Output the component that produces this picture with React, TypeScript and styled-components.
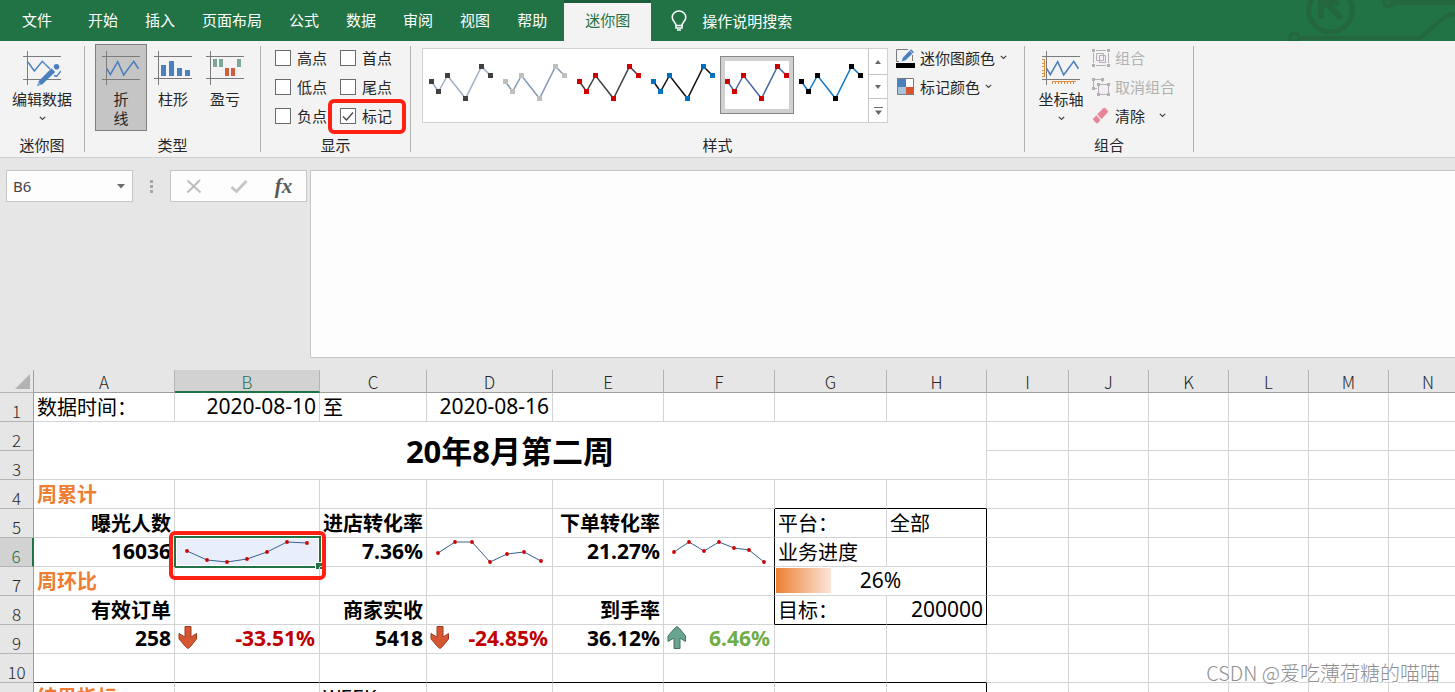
import React from 'react';
import styled, { createGlobalStyle, css } from 'styled-components';

const GREEN = '#217346';
const LINE = '#d4d4d4';
const BLUE = '#4a81bd';
const ORANGE = '#ed7d31';
const MARK = '#ff2214';

const GlobalStyle = createGlobalStyle`
  * { box-sizing: border-box; }
  body {
    margin: 0;
    background: #e6e6e6;
    color: #262626;
    font: 15px/18px "Noto Sans CJK SC", "Noto Sans", sans-serif;
  }
  button, input, textarea { font: inherit; color: inherit; }
  button { background: none; border: 0; padding: 0; white-space: nowrap; }
  svg { display: block; flex: none; }
`;

const Page = styled.div`
  position: relative;
  height: 100vh;
  display: flex;
  flex-direction: column;
  overflow: hidden;
`;

/* ---------- tab strip ---------- */

const TabStrip = styled.header`
  position: relative;
  flex: none;
  height: 41px;
  padding-left: 9px;
  display: flex;
  align-items: stretch;
  background: ${GREEN};
  color: #fff;
`;

const Tabs = styled.nav`
  display: flex;
  gap: 1px;
`;

const Tab = styled.button<{ $file?: boolean; $active?: boolean }>`
  padding: 0 13px 2px;
  ${(p) => p.$file && css`margin-right: 9px;`}
  ${(p) =>
    p.$active &&
    css`
      margin-left: 3px;
      padding: 0 21px 5px;
      border-top: 3px solid #1b5e39;
      background: #f3f3f3;
      color: ${GREEN};
    `}
`;

const TellMe = styled.button`
  display: flex;
  align-items: center;
  gap: 15px;
  padding: 0 20px;
  z-index: 1;
`;

const Decoration = styled.svg`
  position: absolute;
  top: 0;
  right: 0;
`;

/* ---------- ribbon ---------- */

const RibbonBar = styled.div`
  flex: none;
  display: flex;
  height: 117px;
  background: #f3f3f3;
  border-bottom: 1px solid #d0d0d0;
`;

const Group = styled.section<{ $width: number; $left: number }>`
  flex: none;
  width: ${(p) => p.$width}px;
  display: grid;
  grid-template-rows: 1fr 24px;
  & > div {
    padding: 2px 0 0 ${(p) => p.$left}px;
  }
`;

const GroupBody = styled.div`
  display: flex;
  align-items: flex-start;
`;

const GroupName = styled.span`
  text-align: center;
  line-height: 24px;
`;

const Separator = styled.i`
  flex: none;
  width: 1px;
  margin: 5px 0;
  background: #b1b1b1;
`;

const BigButton = styled.button<{ $pressed?: boolean; $wide?: boolean }>`
  width: ${(p) => (p.$wide ? 64 : 52)}px;
  height: 87px;
  margin-top: 1px;
  padding-top: 5px;
  border: 1px solid ${(p) => (p.$pressed ? '#7f7f7f' : 'transparent')};
  background: ${(p) => (p.$pressed ? '#c5c5c5' : 'transparent')};
  display: flex;
  flex-direction: column;
  align-items: center;
  line-height: 19px;
`;

const BigCaption = styled.span<{ $stacked?: boolean }>`
  margin: 2px 0 8px;
  ${(p) => p.$stacked && css`width: 16px; white-space: normal;`}
`;

const CheckGrid = styled.div`
  display: grid;
  grid-template-columns: 65px 65px;
  grid-auto-rows: 29px;
`;

const CheckLabel = styled.label<{ $marked?: boolean }>`
  position: relative;
  display: flex;
  align-items: center;
  gap: 6px;
  width: 52px;
  white-space: nowrap;
  ${(p) =>
    p.$marked &&
    css`
      &::after {
        content: '';
        position: absolute;
        inset: -2px -14px -4px -12px;
        border: 4px solid ${MARK};
        border-radius: 6px;
      }
    `}
`;

const Check = styled.input`
  appearance: none;
  flex: none;
  width: 16px;
  height: 16px;
  margin: 0;
  border: 1px solid #6a6a6a;
  background: #fff;
  &:checked {
    background: #fff
      url("data:image/svg+xml,%3Csvg xmlns='http://www.w3.org/2000/svg' width='14' height='14'%3E%3Cpath d='M2 7.5 5.5 11 12 3.5' fill='none' stroke='%23444' stroke-width='1.3'/%3E%3C/svg%3E")
      center no-repeat;
  }
`;

const Gallery = styled.div`
  display: flex;
  height: 75px;
  margin-top: 5px;
  border: 1px solid #d0d0d0;
  background: #fff;
`;

const GalleryItems = styled.div`
  display: flex;
  align-items: flex-start;
  padding: 7px 0 0 1px;
`;

const StyleItem = styled.button<{ $selected?: boolean }>`
  width: 74px;
  height: 58px;
  ${(p) =>
    p.$selected &&
    css`
      box-shadow: inset 0 0 0 1px #868686, inset 0 0 0 5px #d0d0d0;
    `}
`;

const GalleryScroll = styled.div`
  display: grid;
  grid-template-rows: 25px 24px 24px;
  width: 19px;
  border-left: 1px solid #c6c6c6;
`;

const ScrollButton = styled.button`
  display: grid;
  place-items: center;
  & + & {
    border-top: 1px solid #c6c6c6;
  }
`;

const Commands = styled.div<{ $gap: number }>`
  display: flex;
  flex-direction: column;
  align-items: flex-start;
  margin-left: ${(p) => p.$gap}px;
`;

const Command = styled.button`
  display: flex;
  align-items: center;
  gap: 5px;
  height: 29px;
  &:disabled {
    color: #b1b1b1;
  }
`;

const Spacer = styled.span`
  width: 4px;
`;

/* ---------- formula bar ---------- */

const FormulaRow = styled.div`
  flex: none;
  display: flex;
  align-items: flex-start;
  padding: 12px 0 12px 6px;
`;

const NameBox = styled.div`
  display: flex;
  align-items: center;
  width: 127px;
  height: 32px;
  border: 1px solid #c6c6c6;
  background: #fdfdfd;
`;

const NameInput = styled.input`
  flex: 1;
  min-width: 0;
  padding: 0 6px;
  border: 0;
  background: none;
  color: #444;
  font-family: "Noto Sans", sans-serif;
`;

const NameDrop = styled.button`
  width: 22px;
  height: 30px;
  display: grid;
  place-items: center;
`;

const Grip = styled.div`
  width: 37px;
  height: 32px;
  display: grid;
  place-items: center;
`;

const EntryButtons = styled.div`
  display: grid;
  grid-template-columns: repeat(3, 45px);
  width: 137px;
  height: 32px;
  margin-right: 3px;
  border: 1px solid #c6c6c6;
  background: #fdfdfd;
`;

const EntryButton = styled.button`
  display: grid;
  place-items: center;
  color: #595959;
  font: italic bold 21px/30px "Liberation Serif", serif;
`;

const FormulaInput = styled.textarea`
  flex: 1;
  height: 188px;
  padding: 6px;
  resize: none;
  border: 1px solid #c6c6c6;
  border-right: 0;
  background: #fdfdfd;
`;

/* ---------- sheet ---------- */

const SheetArea = styled.main`
  flex: 1;
  min-height: 0;
  overflow: hidden;
`;

const Sheet = styled.table`
  width: max(100%, 1468px);
  table-layout: fixed;
  border-collapse: separate;
  border-spacing: 0;
  background: #fff;
  color: #000;
  font-size: 20px;
  line-height: 28px;
`;

const ColHead = styled.th<{ $selected?: boolean }>`
  height: 23px;
  padding: ${(p) => (p.$selected ? '3px 0 0' : '2px 0 1px')};
  background: ${(p) => (p.$selected ? '#d2d2d2' : '#e6e6e6')};
  color: ${(p) => (p.$selected ? GREEN : '#262626')};
  border-right: 1px solid #b4b4b4;
  border-bottom: ${(p) => (p.$selected ? `2px solid ${GREEN}` : '1px solid #9f9f9f')};
  font-size: 17px;
  font-weight: 300;
  line-height: ${(p) => (p.$selected ? 18 : 19)}px;
  text-align: center;
`;

const Corner = styled.th`
  height: 23px;
  padding: 0 3px 0 15px;
  background: #e6e6e6;
  border-right: 1px solid #9f9f9f;
  border-bottom: 1px solid #b4b4b4;
`;

const RowHead = styled.th<{ $selected?: boolean }>`
  height: 29px;
  padding: 8px 0 0;
  background: ${(p) => (p.$selected ? '#d2d2d2' : '#e6e6e6')};
  color: ${(p) => (p.$selected ? GREEN : '#262626')};
  border-right: ${(p) => (p.$selected ? `2px solid ${GREEN}` : '1px solid #9f9f9f')};
  border-bottom: 1px solid #b4b4b4;
  font-size: 17px;
  font-weight: 300;
  line-height: 20px;
  text-align: center;
`;

type Tone = 'black' | 'section' | 'down' | 'up';
const TONES: Record<Tone, string> = {
  black: '#000',
  section: ORANGE,
  down: '#c00000',
  up: '#70ad47',
};

const Cell = styled.td<{
  $align?: 'right' | 'center';
  $bold?: boolean;
  $tone?: Tone;
  $number?: boolean;
  $frameRight?: boolean;
  $frameBottom?: boolean;
}>`
  position: relative;
  height: 29px;
  padding: 0 3px;
  white-space: nowrap;
  text-align: ${(p) => p.$align ?? 'left'};
  font-weight: ${(p) => (p.$bold ? 700 : 400)};
  color: ${(p) => TONES[p.$tone ?? 'black']};
  border-right: 1px solid ${(p) => (p.$frameRight ? '#000' : LINE)};
  border-bottom: 1px solid ${(p) => (p.$frameBottom ? '#000' : LINE)};
  ${(p) =>
    p.$number &&
    css`
      padding-bottom: 2px;
      font-family: "Noto Sans", sans-serif;
      font-size: 21px;
      line-height: 26px;
    `}
`;

const TitleCell = styled(Cell)`
  font-size: 31px;
  line-height: 56px;
  font-family: "Noto Sans", "Noto Sans CJK SC", sans-serif;
`;

const SparkCell = styled(Cell)`
  padding: 0;
`;

const Trend = styled.div`
  display: flex;
  align-items: center;
  justify-content: space-between;
  padding-right: 1px;
`;

const DataBar = styled.span`
  position: absolute;
  left: 1px;
  top: 1px;
  bottom: 2px;
  background: linear-gradient(90deg, #ee7f33, #fbe6da);
`;

const OverBar = styled.span`
  position: relative;
`;

const Selection = styled.div`
  position: absolute;
  inset: -2px -2px -2px -1px;
  border: 2px solid ${GREEN};
  background: #e9effa;
  box-shadow: inset 0 0 0 1px #fff;
  &::after {
    content: '';
    position: absolute;
    right: -3px;
    bottom: -3px;
    width: 6px;
    height: 6px;
    background: ${GREEN};
    border: solid #fff;
    border-width: 1px 0 0 1px;
  }
`;

const SparkLayer = styled.div`
  position: relative;
`;

const CellMark = styled.div`
  position: absolute;
  z-index: 1;
  inset: -7px -7px -14px -6px;
  border: 4px solid ${MARK};
  border-radius: 6px;
`;

const Watermark = styled.div`
  position: absolute;
  right: 15px;
  bottom: 5px;
  color: #8f8f8f;
  font-size: 20px;
  line-height: 28px;
  font-weight: 300;
  text-shadow: 1px 1px 0 #fff;
`;

/* ---------- drawings ---------- */

const Chevron = () => (
  <svg width="7" height="5" viewBox="0 0 7 5">
    <path d="M.8 .8 3.5 3.5 6.2 .8" fill="none" stroke="#444" strokeWidth="1.2" />
  </svg>
);

const Axes = ({ base = 29.5 }: { base?: number }) => (
  <path d={`M4.5 1V35M0 6.5H38M0 ${base}H38`} fill="none" stroke="#7b7b7b" />
);

const ZIGZAG = 'M4.7 18.3 8.3 24.7 15.7 11.7 21.7 25 31.7 11.3 36.5 18.8';

const Icon38 = ({ children }: { children: React.ReactNode }) => (
  <svg width="38" height="37" viewBox="0 0 38 37">{children}</svg>
);

const EditDataIcon = () => (
  <Icon38>
    <Axes />
    <path d="M5 12 11.3 21 19.3 11.3 27 19M31 25.5 33.5 26.5 38 21" fill="none" stroke={BLUE} strokeWidth="1.4" />
    <path d="M14 36 15.8 31 28.5 18.2 32.2 22 19.2 34.6Z" fill={BLUE} />
    <circle cx="33.500" cy="16.800" r="2.800" fill={BLUE} />
    <path d="m29.2 16.8 4.400 4.400" stroke="#f3f3f3" />
    <path d="m14.5 32.2 3.6 3.4" stroke="#f3f3f3" strokeWidth=".8" />
  </Icon38>
);

const LineIcon = () => (
  <Icon38>
    <Axes />
    <path d={ZIGZAG} fill="none" stroke={BLUE} strokeWidth="1.6" />
  </Icon38>
);

const ColumnIcon = () => (
  <Icon38>
    <Axes base={28.5} />
    <path d="M7 15h5v11H7zM15 11h5v15h-5zM23 18h5v8h-5zM31 20h5v6h-5z" fill={BLUE} />
  </Icon38>
);

const WinLossIcon = () => (
  <Icon38>
    <Axes base={28.5} />
    <path d="M7 9h4v8H7zM13 9h4v8h-4zM31 9h4v8h-4z" fill="#7aa796" />
    <path d="M19 18h4v8h-4zM25 18h4v8h-4z" fill="#d65c3b" />
  </Icon38>
);

const AxisIcon = () => (
  <Icon38>
    <Axes />
    <path d={ZIGZAG} fill="none" stroke={BLUE} strokeWidth="1.6" />
    <path
      d="M2.5 9v18M0 9.5h2.5M0 13.5h2.5M0 16.5h2.5M0 20.5h2.5M0 23.5h2.5M0 26.5h2.5M10 31.5h24M10.5 31.5V34M13.5 31.5V34M16.5 31.5V34M19.5 31.5V34M22.5 31.5V34M25.5 31.5V34M28.5 31.5V34M31.5 31.5V34"
      fill="none"
      stroke="#e58b3a"
    />
  </Icon38>
);

const BulbIcon = () => (
  <svg width="16" height="21" viewBox="0 0 16 21" fill="none" stroke="#fff" strokeWidth="1.5">
    <path d="M5 15.5C5 12.5 1.2 11.4 1.2 7.3A6.6 6.6 0 0 1 8 .9a6.6 6.6 0 0 1 6.8 6.4C14.8 11.4 11 12.5 11 15.5Z" />
    <path d="M5 15v3h6v-3M6 20h4" />
  </svg>
);

const Circuit = () => (
  <Decoration width="170" height="41" viewBox="0 0 170 41" fill="none" stroke="#246640" aria-hidden>
    <circle cx="45.5" cy="10" r="21.8" strokeWidth="5" />
    <path d="M56.5 18.5 38.5 1M36 19V2.5H54" strokeWidth="6" />
    <circle cx="9.3" cy="37.5" r="4.5" strokeWidth="3.5" />
    <path d="M12 37.8H135L160 17Q164 14 170 14" strokeWidth="4" />
    <circle cx="103.5" cy="2.5" r="4" strokeWidth="4" />
    <path d="M107 2.5H170" strokeWidth="5" />
  </Decoration>
);

const PenColorIcon = () => (
  <svg width="19" height="20" viewBox="0 0 19 20">
    <path d="M12 1.5H.5V13.5H3M16.5 7V13" fill="none" stroke="#7b7b7b" />
    <path d="M5.5 13.5 7 9.5 15 1.3 18 4 9.5 12.2Z" fill={BLUE} />
    <path d="m13.8 2.6 3 2.9" stroke="#f3f3f3" strokeWidth=".8" />
    <path d="M0 15h19v5H0z" fill="#000" />
  </svg>
);

const MarkerColorIcon = () => (
  <svg width="19" height="19" viewBox="0 0 19 19">
    <path d="M1 1h9v9H1z" fill={BLUE} />
    <path d="M10 1h8v9h-8z" fill="#fff" />
    <path d="M1 10h9v8H1z" fill="#a9c2de" />
    <path d="M10 10h8v8h-8z" fill="#d8532f" />
    <path d="M1.5 1.5h16v16h-16z" fill="none" stroke="#7b7b7b" />
  </svg>
);

const GroupIcon = () => (
  <svg width="18" height="18" viewBox="0 0 18 18">
    <path d="M4.5 4.5h7v7h-7zM7.5 6.5h6v7h-6z" fill="#f5ecf7" stroke="#b1b1b1" />
    <path d="M4 1.5h10M4 16.5h10M1.5 4v10M16.5 4v10" stroke="#b1b1b1" />
    <path d="M0 0h3v3H0zM15 0h3v3h-3zM0 15h3v3H0zM15 15h3v3h-3z" fill="#b1b1b1" />
  </svg>
);

const UngroupIcon = () => (
  <svg width="18" height="18" viewBox="0 0 18 18">
    <path d="M6.5 6.5h10v10h-10z" fill="#f5ecf7" />
    <path d="M5 10.5H1.5V1.5h9V4M6.5 6.5h10v10h-10z" fill="none" stroke="#b1b1b1" />
    <path d="M0 0h3v3H0zM9 0h3v3H9zM0 9h3v3H0zM5 5h3v3H5zM15 5h3v3h-3zM5 15h3v3H5zM15 15h3v3h-3z" fill="#b1b1b1" />
  </svg>
);

const EraserIcon = () => (
  <svg width="18" height="18" viewBox="0 0 18 18" fill="#e8859a">
    <path d="M5.2 7.2 11.3 1.2Q12.3.4 13.2 1.200L15.600 3.400Q16.400 4.400 15.600 5.400L9.500 12.200Z" />
    <path d="M4.300 8.200 8.500 13.100 6 16Q5 16.900 4 16L1.300 13Q.6 12.200 1.300 11.400Z" />
  </svg>
);

const MARKERS = [[7.5, 25.5], [14.5, 35.5], [23.5, 19.5], [41.5, 42.5], [57.5, 10.5], [66.5, 19.5]];

const StylePreview = ({ line, dot }: { line: string; dot: string }) => (
  <svg width="74" height="58" viewBox="0 0 74 58">
    <polyline points={MARKERS.join(' ')} fill="none" stroke={line} strokeWidth="1.5" />
    {MARKERS.map(([x, y]) => (
      <rect key={x} x={x - 2.5} y={y - 2.5} width="5" height="5" fill={dot} />
    ))}
  </svg>
);

const Sparkline = ({ width, points }: { width: number; points: number[][] }) => (
  <svg width={width} height="28" viewBox={`0 0 ${width} 28`}>
    <polyline points={points.join(' ')} fill="none" stroke="#376092" strokeWidth="1" />
    {points.map(([x, y]) => (
      <circle key={x} cx={x} cy={y} r="1.9" fill="#d00000" />
    ))}
  </svg>
);

const ARROW = 'M7 .5H13V11L18.5 7.5V13L12.5 20.5 10 22.5 7.5 20.5 1 13V7.5L7 11Z';

const TrendArrow = ({ up }: { up?: boolean }) => (
  <svg width="20" height="24" viewBox="0 0 20 24">
    <path
      d={ARROW}
      transform={up ? 'translate(0 23) scale(1 -1)' : undefined}
      fill={up ? '#68a490' : '#d65532'}
      stroke={up ? '#44705f' : '#9c3f24'}
    />
  </svg>
);

/* ---------- data ---------- */

const TABS = ['开始', '插入', '页面布局', '公式', '数据', '审阅', '视图', '帮助'];

const CHECKS = ['高点', '首点', '低点', '尾点', '负点', '标记'];

const STYLES = [
  { line: '#a0afc8', dot: '#404040' },
  { line: '#8497b8', dot: '#bfbfbf' },
  { line: '#404040', dot: '#d00000' },
  { line: '#111111', dot: '#0070c0' },
  { line: '#466a9f', dot: '#d00000' },
  { line: '#1078c8', dot: '#000000' },
];

const COLUMNS: [string, number?][] = [
  ['A', 141], ['B', 145], ['C', 107], ['D', 126], ['E', 111], ['F', 111], ['G', 112],
  ['H', 100], ['I', 82], ['J', 80], ['K', 80], ['L', 80], ['M', 80], ['N'],
];

const EXPOSURE = [[12, 13], [32, 22], [52, 24], [72, 21], [92, 14], [112, 4], [132, 5]];
const VISITS = [[11, 15], [28, 4], [45, 4], [63, 24], [80, 16], [97, 14], [114, 23]];
const ORDERS = [[10, 14], [25, 4], [40, 13], [55, 4], [70, 10], [85, 12], [100, 24]];

const PROGRESS = 26;

const Blank = ({ count }: { count: number }) => (
  <>{Array.from({ length: count }, (_, i) => <Cell key={i} />)}</>
);

/* ---------- parts ---------- */

const Ribbon = () => (
  <RibbonBar>
    <Group $width={84} $left={10}>
      <GroupBody>
        <BigButton $wide>
          <EditDataIcon />
          <BigCaption>编辑数据</BigCaption>
          <Chevron />
        </BigButton>
      </GroupBody>
      <GroupName>迷你图</GroupName>
    </Group>
    <Separator />
    <Group $width={175} $left={10}>
      <GroupBody>
        <BigButton $pressed aria-pressed>
          <LineIcon />
          <BigCaption $stacked>折线</BigCaption>
        </BigButton>
        <BigButton>
          <ColumnIcon />
          <BigCaption>柱形</BigCaption>
        </BigButton>
        <BigButton>
          <WinLossIcon />
          <BigCaption>盈亏</BigCaption>
        </BigButton>
      </GroupBody>
      <GroupName>类型</GroupName>
    </Group>
    <Separator />
    <Group $width={149} $left={14}>
      <CheckGrid>
        {CHECKS.map((name) => (
          <CheckLabel key={name} $marked={name === '标记'}>
            <Check type="checkbox" defaultChecked={name === '标记'} />
            {name}
          </CheckLabel>
        ))}
      </CheckGrid>
      <GroupName>显示</GroupName>
    </Group>
    <Separator />
    <Group $width={613} $left={11}>
      <GroupBody>
        <Gallery>
          <GalleryItems>
            {STYLES.map((s, i) => (
              <StyleItem key={i} $selected={i === 4} aria-label={`样式 ${i + 1}`}>
                <StylePreview line={s.line} dot={s.dot} />
              </StyleItem>
            ))}
          </GalleryItems>
          <GalleryScroll>
            <ScrollButton>
              <svg width="6" height="4"><path d="M0 4 3 0 6 4Z" fill="#6a6a6a" /></svg>
            </ScrollButton>
            <ScrollButton>
              <svg width="6" height="4"><path d="M0 0 3 4 6 0Z" fill="#6a6a6a" /></svg>
            </ScrollButton>
            <ScrollButton>
              <svg width="9" height="8"><path d="M0 0h9v1H0zM1 3.5h7L4.5 8Z" fill="#6a6a6a" /></svg>
            </ScrollButton>
          </GalleryScroll>
        </Gallery>
        <Commands $gap={8}>
          <Command><PenColorIcon />迷你图颜色<Chevron /></Command>
          <Command><MarkerColorIcon />标记颜色<Chevron /></Command>
        </Commands>
      </GroupBody>
      <GroupName>样式</GroupName>
    </Group>
    <Separator />
    <Group $width={168} $left={10}>
      <GroupBody>
        <BigButton>
          <AxisIcon />
          <BigCaption>坐标轴</BigCaption>
          <Chevron />
        </BigButton>
        <Commands $gap={5}>
          <Command disabled><GroupIcon />组合</Command>
          <Command disabled><UngroupIcon />取消组合</Command>
          <Command><EraserIcon />清除<Spacer /><Chevron /></Command>
        </Commands>
      </GroupBody>
      <GroupName>组合</GroupName>
    </Group>
    <Separator />
  </RibbonBar>
);

const FormulaBar = () => (
  <FormulaRow>
    <NameBox>
      <NameInput aria-label="名称框" defaultValue="B6" />
      <NameDrop>
        <svg width="8" height="5"><path d="M0 0h8L4 4.5Z" fill="#6a6a6a" /></svg>
      </NameDrop>
    </NameBox>
    <Grip>
      <svg width="3" height="13"><path d="M0 0h3v3H0zM0 5h3v3H0zM0 10h3v3H0z" fill="#a6a6a6" /></svg>
    </Grip>
    <EntryButtons>
      <EntryButton>
        <svg width="16" height="15"><path d="M1.5 1.500 14.5 13.5M14 1 1.5 13.5" stroke="#bdbdbd" strokeWidth="2" /></svg>
      </EntryButton>
      <EntryButton>
        <svg width="18" height="15"><path d="M1.5 8 6.5 12.5 16.5 2" fill="none" stroke="#c6c6c6" strokeWidth="3" /></svg>
      </EntryButton>
      <EntryButton>fx</EntryButton>
    </EntryButtons>
    <FormulaInput aria-label="编辑栏" />
  </FormulaRow>
);

const Grid = () => (
  <Sheet>
    <colgroup>
      <col width={34} />
      {COLUMNS.map(([name, width]) => <col key={name} width={width} />)}
    </colgroup>
    <thead>
      <tr>
        <Corner>
          <svg width="15" height="15"><path d="M15 0V15H0Z" fill="#b2b2b2" /></svg>
        </Corner>
        {COLUMNS.map(([name]) => <ColHead key={name} $selected={name === 'B'}>{name}</ColHead>)}
      </tr>
    </thead>
    <tbody>
      <tr>
        <RowHead>1</RowHead>
        <Cell>数据时间：</Cell>
        <Cell $number $align="right">2020-08-10</Cell>
        <Cell>至</Cell>
        <Cell $number $align="right">2020-08-16</Cell>
        <Blank count={10} />
      </tr>
      <tr>
        <RowHead>2</RowHead>
        <TitleCell colSpan={8} rowSpan={2} $align="center" $bold>20年8月第二周</TitleCell>
        <Blank count={6} />
      </tr>
      <tr>
        <RowHead>3</RowHead>
        <Blank count={6} />
      </tr>
      <tr>
        <RowHead>4</RowHead>
        <Cell $bold $tone="section">周累计</Cell>
        <Blank count={5} />
        <Cell $frameBottom />
        <Cell $frameBottom />
        <Blank count={6} />
      </tr>
      <tr>
        <RowHead>5</RowHead>
        <Cell $bold $align="right">曝光人数</Cell>
        <Cell />
        <Cell $bold $align="right">进店转化率</Cell>
        <Cell />
        <Cell $bold $align="right">下单转化率</Cell>
        <Cell $frameRight />
        <Cell>平台：</Cell>
        <Cell $frameRight>全部</Cell>
        <Blank count={6} />
      </tr>
      <tr>
        <RowHead $selected>6</RowHead>
        <Cell $number $bold $align="right">16036</Cell>
        <SparkCell>
          <Selection />
          <SparkLayer><Sparkline width={144} points={EXPOSURE} /></SparkLayer>
          <CellMark />
        </SparkCell>
        <Cell $number $bold $align="right">7.36%</Cell>
        <SparkCell><Sparkline width={125} points={VISITS} /></SparkCell>
        <Cell $number $bold $align="right">21.27%</Cell>
        <SparkCell $frameRight><Sparkline width={110} points={ORDERS} /></SparkCell>
        <Cell>业务进度</Cell>
        <Cell $frameRight />
        <Blank count={6} />
      </tr>
      <tr>
        <RowHead>7</RowHead>
        <Cell $bold $tone="section">周环比</Cell>
        <Blank count={4} />
        <Cell $frameRight />
        <Cell colSpan={2} $number $align="center" $frameRight>
          <DataBar style={{ width: `${PROGRESS}%` }} />
          <OverBar>{PROGRESS}%</OverBar>
        </Cell>
        <Blank count={6} />
      </tr>
      <tr>
        <RowHead>8</RowHead>
        <Cell $bold $align="right">有效订单</Cell>
        <Cell />
        <Cell $bold $align="right">商家实收</Cell>
        <Cell />
        <Cell $bold $align="right">到手率</Cell>
        <Cell $frameRight />
        <Cell $frameBottom>目标：</Cell>
        <Cell $number $align="right" $frameRight $frameBottom>200000</Cell>
        <Blank count={6} />
      </tr>
      <tr>
        <RowHead>9</RowHead>
        <Cell $number $bold $align="right">258</Cell>
        <Cell $number $bold $tone="down"><Trend><TrendArrow />-33.51%</Trend></Cell>
        <Cell $number $bold $align="right">5418</Cell>
        <Cell $number $bold $tone="down"><Trend><TrendArrow />-24.85%</Trend></Cell>
        <Cell $number $bold $align="right">36.12%</Cell>
        <Cell $number $bold $tone="up"><Trend><TrendArrow up />6.46%</Trend></Cell>
        <Blank count={8} />
      </tr>
      <tr>
        <RowHead>10</RowHead>
        {COLUMNS.slice(0, 8).map(([name]) => <Cell key={name} $frameBottom />)}
        <Blank count={6} />
      </tr>
      <tr>
        <RowHead />
        <Cell $bold $tone="section">结果指标</Cell>
        <Cell />
        <Cell>WEEK</Cell>
        <Blank count={4} />
        <Cell $frameRight />
        <Blank count={6} />
      </tr>
    </tbody>
  </Sheet>
);

export default function App() {
  return (
    <Page>
      <GlobalStyle />
      <TabStrip>
        <Circuit />
        <Tabs>
          <Tab $file>文件</Tab>
          {TABS.map((name) => <Tab key={name}>{name}</Tab>)}
          <Tab $active>迷你图</Tab>
        </Tabs>
        <TellMe><BulbIcon />操作说明搜索</TellMe>
      </TabStrip>
      <Ribbon />
      <FormulaBar />
      <SheetArea><Grid /></SheetArea>
      <Watermark>CSDN @爱吃薄荷糖的喵喵</Watermark>
    </Page>
  );
}
